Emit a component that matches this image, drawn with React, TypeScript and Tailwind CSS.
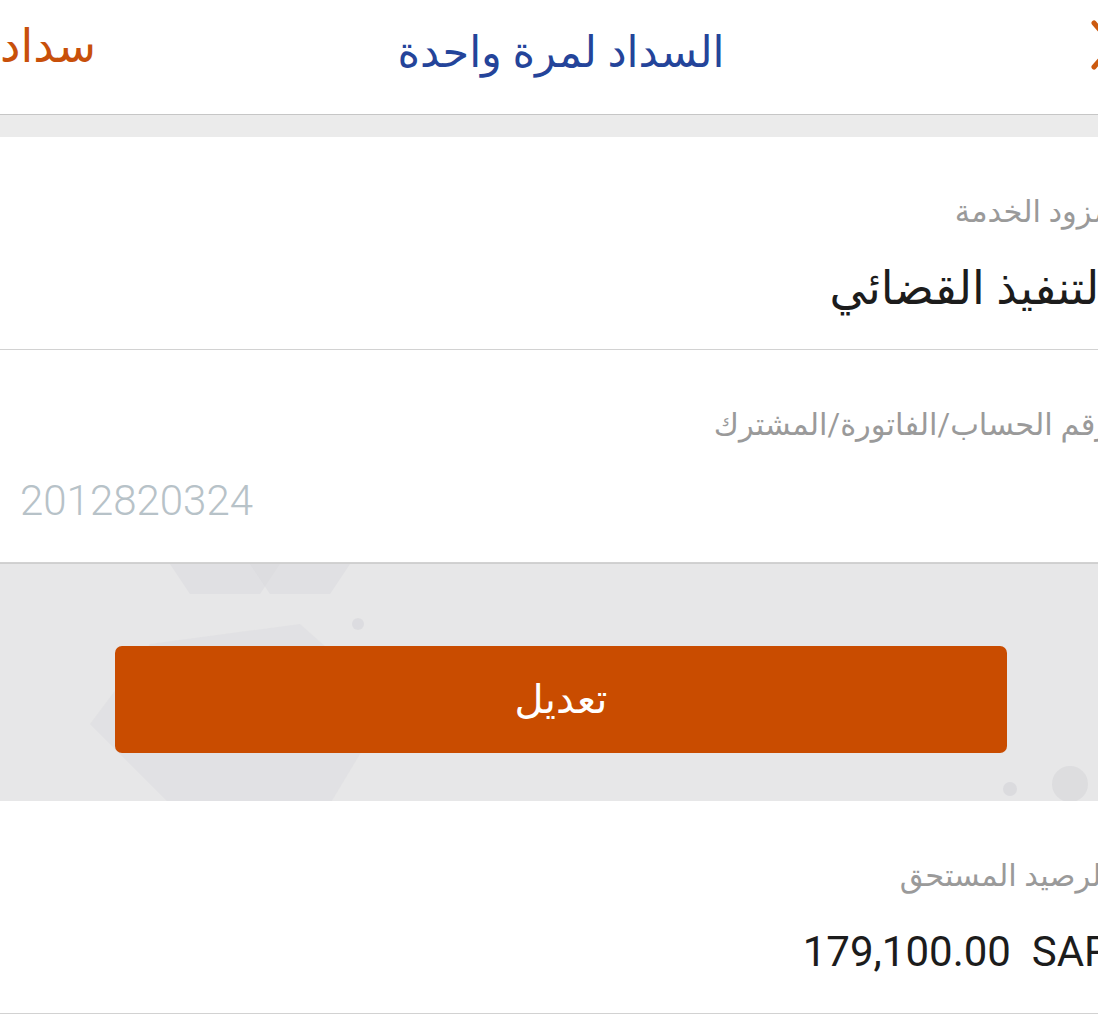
import React from "react";

const font = "font-['Roboto','DejaVu_Sans',sans-serif]";

function Field({ label, value, valueClass, ltr, ltrRight }: { label: string; value: string; valueClass: string; ltr?: boolean; ltrRight?: boolean }) {
  return (
    <div className="h-[213px] bg-white border-b border-[#d2d2d2] flex flex-col">
      <div className="pt-[56px] pr-[12px] h-[38px] box-content text-[30.5px] leading-[38px] text-[#9a9a9a] whitespace-nowrap">{label}</div>
      <div
        dir={ltr || ltrRight ? "ltr" : "rtl"}
        className={`mt-[32px] h-[50px] leading-[50px] whitespace-pre ${ltr ? "pl-[20px] text-left" : ltrRight ? "pr-[12px] text-right" : "pr-[10px]"} ${valueClass}`}
      >
        {value}
      </div>
    </div>
  );
}

export default function App() {
  return (
    <div className={`w-[1098px] h-[1022px] overflow-hidden bg-white ${font}`} dir="rtl">
      <div className="-mr-[24px]">
        {/* header */}
        <div className="relative h-[115px] bg-white border-b border-[#c6c6c6] flex items-center justify-between">
          <div className="w-[26px] h-[52px] mr-[5px] -mt-[24px] flex items-center justify-center">
            <svg width="26" height="52" viewBox="0 0 26 52" fill="none">
              <path d="M3 4 L22 26 L3 48" stroke="#cc5a10" strokeWidth="5" strokeLinecap="round" strokeLinejoin="round" />
            </svg>
          </div>
          <div className="absolute inset-x-0 top-0 h-[104px] flex items-center justify-center text-[43px] text-[#24449a] font-medium">
            السداد لمرة واحدة
          </div>
          <div className="-mt-[22px] text-[46px] text-[#c8500a] font-medium">سداد</div>
        </div>
        <div className="h-[22px] bg-[#ebebeb]" />
        <Field label="مزود الخدمة" value="التنفيذ القضائي" valueClass="text-[46px] text-[#1c1c1c]" />
        <Field label="رقم الحساب/الفاتورة/المشترك" value="2012820324" valueClass="text-[42px] text-[#b7c2c8] font-light" ltr />
        {/* grey band with button */}
        <div className="relative h-[238px] bg-[#e7e7e8] overflow-hidden border-t border-[#cfcfcf]">
          <svg className="absolute inset-0" width="1122" height="238" viewBox="0 0 1122 238">
            <polygon points="150,80 300,60 390,140 330,240 170,240 90,160" fill="#dcdce0" opacity="0.55" />
            <polygon points="170,0 280,0 260,30 190,30" fill="#dadade" opacity="0.5" />
            <polygon points="250,0 350,0 330,30 270,30" fill="#dadade" opacity="0.5" />
            <circle cx="1070" cy="220" r="18" fill="#d8d8dc" opacity="0.7" />
            <circle cx="1010" cy="225" r="7" fill="#d6d6da" opacity="0.7" />
            <circle cx="358" cy="60" r="6" fill="#d6d6da" opacity="0.6" />
          </svg>
          <div className="relative pt-[82px] px-[115px]">
            <button className="w-full h-[107px] rounded-[7px] bg-[#c94c00] text-white text-[40px] flex items-center justify-center">
              تعديل
            </button>
          </div>
        </div>
        <Field label="الرصيد المستحق" value="179,100.00  SAR" valueClass="text-[42px] text-[#1c1c1c]" ltrRight />
      </div>
    </div>
  );
}
